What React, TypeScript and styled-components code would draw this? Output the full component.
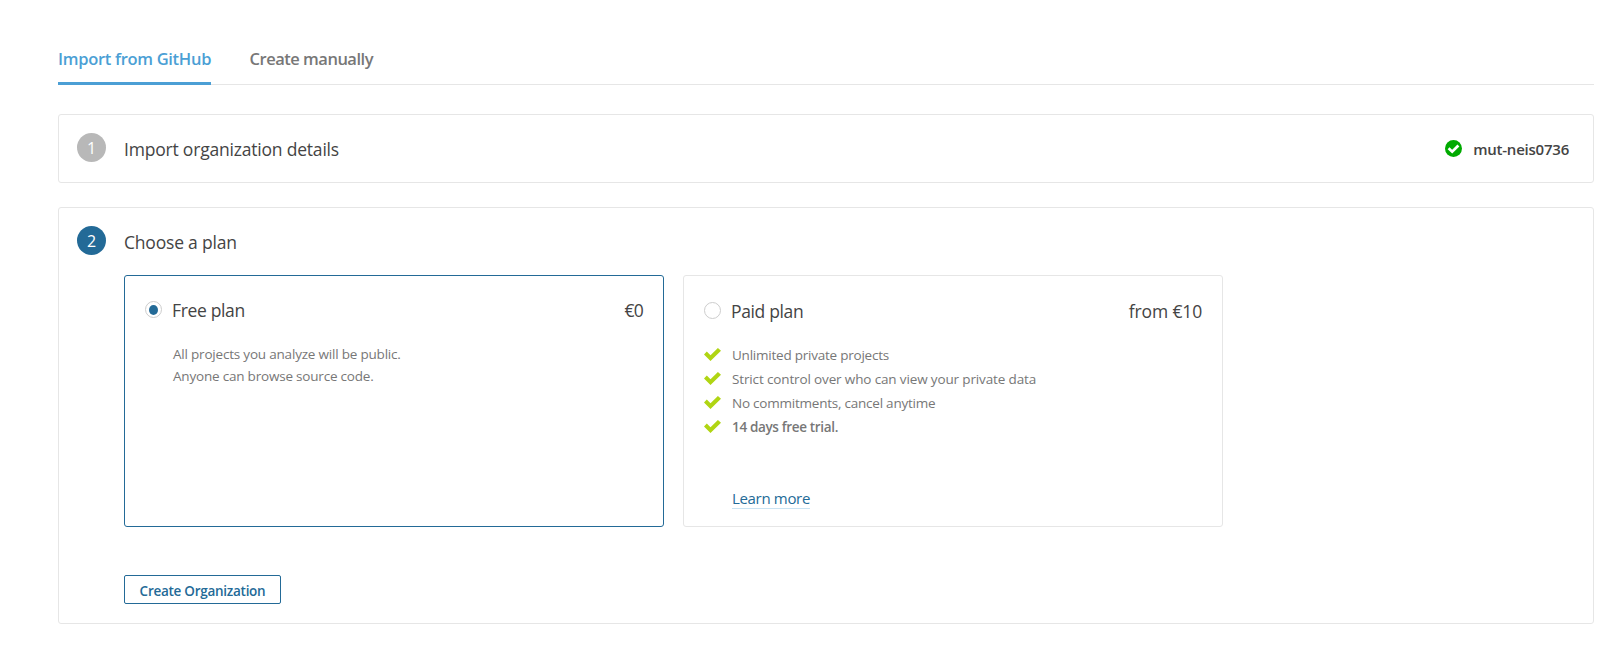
import React, { useState } from 'react';
import styled, { createGlobalStyle } from 'styled-components';

const GlobalStyle = createGlobalStyle`
  * { box-sizing: border-box; }
  body {
    margin: 0;
    background: #fff;
    color: #444;
    font-family: "Open Sans", "Noto Sans", sans-serif;
  }
`;

const Page = styled.main`
  padding: 47px 22px 0 58px;
`;

const Tabs = styled.nav`
  display: flex;
  gap: 38.5px;
  height: 38px;
  border-bottom: 1px solid #e6e6e6;
`;

const Tab = styled.a<{ $active?: boolean; $spacing: number }>`
  height: 38px;
  border-bottom: 3px solid ${p => (p.$active ? '#4b9fd5' : 'transparent')};
  color: ${p => (p.$active ? '#4b9fd5' : '#777')};
  font-size: 16.5px;
  font-weight: 600;
  line-height: 24px;
  letter-spacing: ${p => p.$spacing}px;
  white-space: nowrap;
  cursor: pointer;
`;

const Step = styled.section<{ $height: number; $gap: number }>`
  display: flex;
  align-items: flex-start;
  height: ${p => p.$height}px;
  margin-top: ${p => p.$gap}px;
  padding: 18px 24px 0 18px;
  border: 1px solid #e6e6e6;
  border-radius: 3px;
`;

const StepNumber = styled.span<{ $current?: boolean }>`
  flex: none;
  width: 29px;
  height: 29px;
  margin-right: 18px;
  border-radius: 50%;
  background: ${p => (p.$current ? '#236a97' : '#b8b8b8')};
  color: #fff;
  font-size: 16px;
  line-height: 31px;
  text-align: center;
`;

const StepBody = styled.div`
  flex: 1;
`;

const Title = styled.h2<{ $spacing?: number }>`
  margin: 0;
  font-size: 17.5px;
  font-weight: 400;
  line-height: 24px;
  letter-spacing: ${p => p.$spacing ?? -0.2}px;
  white-space: nowrap;
`;

const StepHeader = styled.header`
  padding: 4px 0 21px;
`;

const Organization = styled.div`
  display: flex;
  align-items: center;
  gap: 11px;
  margin-top: 2px;
  font-size: 15px;
  font-weight: 600;
  line-height: 28px;
  letter-spacing: -0.23px;

  svg { margin-top: -1px; }
`;

const Plans = styled.div`
  display: flex;
  gap: 19px;
`;

const PlanCard = styled.div<{ $selected: boolean; $top: number }>`
  width: 540px;
  height: 252px;
  padding: ${p => p.$top}px 20px 0;
  border: 1px solid ${p => (p.$selected ? '#236a97' : '#e6e6e6')};
  border-radius: 3px;
  cursor: pointer;
`;

const PlanHeader = styled.div`
  display: flex;
`;

const Radio = styled.span<{ $selected: boolean }>`
  display: grid;
  place-items: center;
  width: 17px;
  height: 17px;
  margin: 3px 10px 0 0;
  border: 1px solid #cdcdcd;
  border-radius: 50%;

  &::after {
    content: "";
    width: 9px;
    height: 10px;
    border-radius: 50%;
    background: ${p => (p.$selected ? '#236a97' : 'transparent')};
  }
`;

const Price = styled(Title).attrs({ as: 'span' })`
  margin-left: auto;
`;

const Description = styled.p`
  margin: 21px 0 0 28px;
  color: #777;
  font-size: 13.5px;
  line-height: 22px;
  letter-spacing: -0.2px;
`;

const Benefits = styled.ul`
  margin: 20px 0 48px;
  padding: 0;
  list-style: none;
`;

const Benefit = styled.li<{ $spacing: number; $bold?: boolean }>`
  display: flex;
  align-items: center;
  gap: 11px;
  color: #777;
  font-size: 13.5px;
  font-weight: ${p => (p.$bold ? 600 : 400)};
  line-height: 24px;
  letter-spacing: ${p => p.$spacing}px;

  svg { margin-bottom: 1px; }
`;

const LearnMore = styled.a`
  display: inline-block;
  margin-left: 28px;
  border-bottom: 1px solid #cae3f2;
  color: #236a97;
  font-size: 15px;
  line-height: 20px;
  letter-spacing: -0.33px;
`;

const Button = styled.button`
  display: block;
  width: 157px;
  height: 29px;
  margin-top: 48px;
  padding: 3px 0 0;
  border: 1px solid #236a97;
  border-radius: 2px;
  background: #fff;
  color: #236a97;
  font: 600 13.5px/24px "Open Sans", "Noto Sans", sans-serif;
  letter-spacing: -0.27px;
`;

const Check = () => (
  <svg width="17" height="13" viewBox="0 0 17 13">
    <path d="M0 6.4 2.8 3.6 6.5 7.2 13.9 0 17 2.8 6.5 13Z" fill="#b0d513" />
  </svg>
);

const CheckCircle = () => (
  <svg width="17" height="17" viewBox="0 0 17 17">
    <circle cx="8.5" cy="8.5" r="8.5" fill="#00aa00" />
    <path d="m3.6 8.2 3.6 3.5 6.2-6.2" fill="none" stroke="#fff" strokeWidth="2.7" />
  </svg>
);

const benefits = [
  { text: 'Unlimited private projects', spacing: -0.23 },
  { text: 'Strict control over who can view your private data', spacing: -0.14 },
  { text: 'No commitments, cancel anytime', spacing: -0.23 },
  { text: '14 days free trial.', spacing: -0.34, bold: true },
];

export default function App() {
  const [plan, setPlan] = useState<'free' | 'paid'>('free');
  return (
    <Page>
      <GlobalStyle />
      <Tabs>
        <Tab $active $spacing={-0.3}>Import from GitHub</Tab>
        <Tab $spacing={-0.5}>Create manually</Tab>
      </Tabs>

      <Step $height={69} $gap={29}>
        <StepNumber>1</StepNumber>
        <StepBody>
          <StepHeader><Title>Import organization details</Title></StepHeader>
        </StepBody>
        <Organization><CheckCircle />mut-neis0736</Organization>
      </Step>

      <Step $height={417} $gap={24}>
        <StepNumber $current>2</StepNumber>
        <StepBody>
          <StepHeader><Title>Choose a plan</Title></StepHeader>
          <Plans>
            <PlanCard $selected={plan === 'free'} $top={22} onClick={() => setPlan('free')}>
              <PlanHeader>
                <Radio $selected={plan === 'free'} />
                <Title $spacing={-0.35}>Free plan</Title>
                <Price $spacing={-0.8}>€0</Price>
              </PlanHeader>
              <Description>
                All projects you analyze will be public.<br />
                Anyone can browse source code.
              </Description>
            </PlanCard>
            <PlanCard $selected={plan === 'paid'} $top={23} onClick={() => setPlan('paid')}>
              <PlanHeader>
                <Radio $selected={plan === 'paid'} />
                <Title $spacing={-0.35}>Paid plan</Title>
                <Price $spacing={-0.15}>from €10</Price>
              </PlanHeader>
              <Benefits>
                {benefits.map(b => (
                  <Benefit key={b.text} $spacing={b.spacing} $bold={b.bold}>
                    <Check />{b.text}
                  </Benefit>
                ))}
              </Benefits>
              <LearnMore>Learn more</LearnMore>
            </PlanCard>
          </Plans>
          <Button>Create Organization</Button>
        </StepBody>
      </Step>
    </Page>
  );
}
